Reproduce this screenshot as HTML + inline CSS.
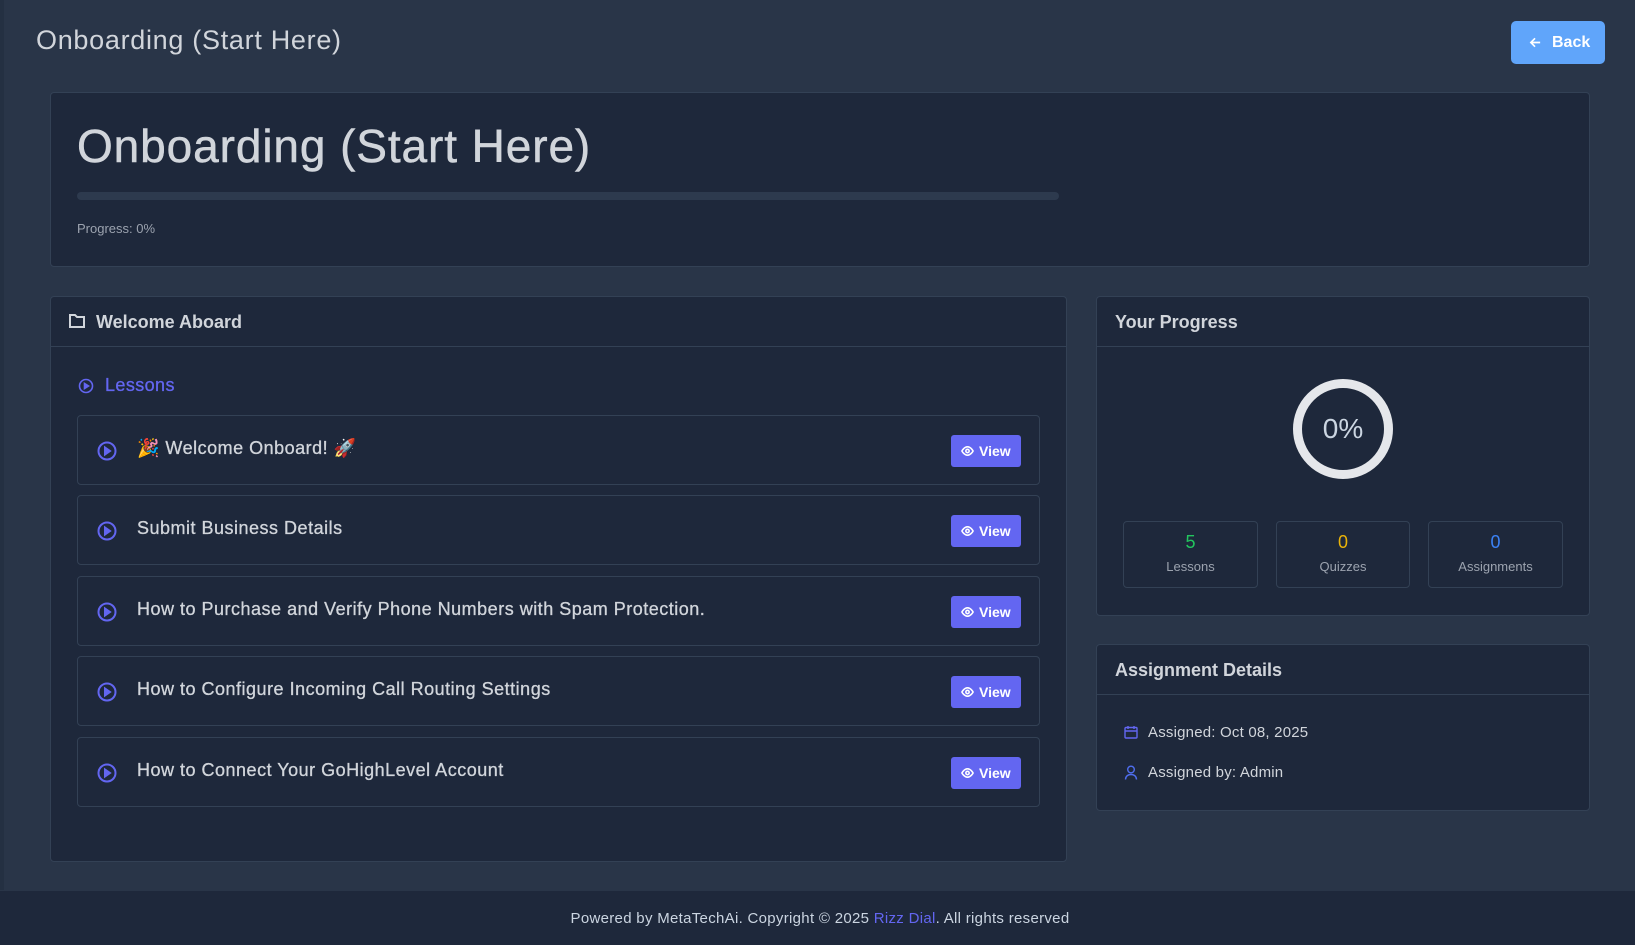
<!DOCTYPE html>
<html><head><meta charset="utf-8"><style>
*{box-sizing:border-box;margin:0;padding:0}
body{width:1635px;height:945px;background:#293548;font-family:"Liberation Sans",sans-serif;color:#d1d5db;position:relative;overflow:hidden}
.abs{position:absolute}
.card{position:absolute;background:#1e283b;border:1px solid #334155;border-radius:4px}
.hdr{position:absolute;left:0;right:0;top:0;height:50px;border-bottom:1px solid #334155}
.row{position:absolute;left:77px;width:963px;height:70px;border:1px solid #334155;border-radius:4px;background:#1e283b}
.row .t{position:absolute;left:59px;top:22px;font-size:18px;color:#d1d5db;letter-spacing:0.5px;-webkit-text-stroke:0.3px #d1d5db}
.row svg.p{position:absolute;left:19px;top:25px}
.btn{position:absolute;left:873px;top:19px;width:70px;height:32px;background:#6366f1;border-radius:3px;color:#fff;font-weight:bold;font-size:14px;line-height:32px;padding-left:28px}
.btn svg{position:absolute;left:10px;top:10px}
.stat{position:absolute;top:521px;height:67px;border:1px solid #334155;border-radius:4px;text-align:center}
.stat b{display:block;font-size:18px;font-weight:normal;margin-top:10px}
.stat span{display:block;font-size:13px;color:#9ca3af;margin-top:6px}
</style></head><body>
<div class="abs" style="left:0;top:0;width:4px;height:890px;background:#243042"></div>
<div class="abs" style="left:36px;top:25px;font-size:27px;color:#d1d5db;letter-spacing:0.7px">Onboarding (Start Here)</div>
<div class="abs" style="left:1511px;top:21px;width:94px;height:43px;background:#60a5fa;border-radius:5px;color:#fff;font-size:16px;font-weight:bold;line-height:43px;padding-left:41px">
<svg class="abs" style="left:18px;top:15px" width="13" height="13" viewBox="0 0 14 14" fill="none" stroke="#fff" stroke-width="1.8"><path d="M12 7H2M6.5 2.5L2 7l4.5 4.5"/></svg>Back</div>

<div class="card" style="left:50px;top:92px;width:1540px;height:175px">
<div class="abs" style="left:26px;top:26px;font-size:46px;color:#d1d5db;letter-spacing:0.9px;-webkit-text-stroke:0.5px #d1d5db">Onboarding (Start Here)</div>
<div class="abs" style="left:26px;top:99px;width:982px;height:8px;background:#2d3a4e;border-radius:4px"></div>
<div class="abs" style="left:26px;top:128px;font-size:13px;color:#9ca3af">Progress: 0%</div>
</div>

<div class="card" style="left:50px;top:296px;width:1017px;height:566px">
<div class="hdr"></div>
<svg class="abs" style="left:18px;top:17px" width="16" height="14" viewBox="0 0 16 14" fill="none" stroke="#d1d5db" stroke-width="2"><path d="M1 1h5l2 2h7v10H1z"/></svg>
<div class="abs" style="left:45px;top:15px;font-size:18px;font-weight:bold;color:#d1d5db">Welcome Aboard</div>
<svg class="abs" style="left:27px;top:81px" width="16" height="16" viewBox="0 0 16 16" fill="none" stroke="#6366f1" stroke-width="1.6"><circle cx="8" cy="8" r="6.5"/><path d="M6.5 5.5v5l4-2.5z" fill="#6366f1"/></svg>
<div class="abs" style="left:54px;top:78px;font-size:18px;color:#6366f1;letter-spacing:0.4px;-webkit-text-stroke:0.3px #6366f1">Lessons</div>
</div>

<div class="row" style="top:415px"><svg class="p" width="20" height="20" viewBox="0 0 20 20" fill="none" stroke="#6366f1" stroke-width="2"><circle cx="10" cy="10" r="8.5"/><path d="M8 6.5v7l5-3.5z" fill="#6366f1"/></svg><div class="t">🎉 Welcome Onboard! 🚀</div><div class="btn"><svg width="13" height="12" viewBox="0 0 14 12" fill="none" stroke="#fff" stroke-width="1.7"><path d="M1 6s2.3-4.5 6-4.5S13 6 13 6s-2.3 4.5-6 4.5S1 6 1 6z"/><circle cx="7" cy="6" r="1.8"/></svg>View</div></div>
<div class="row" style="top:495px"><svg class="p" width="20" height="20" viewBox="0 0 20 20" fill="none" stroke="#6366f1" stroke-width="2"><circle cx="10" cy="10" r="8.5"/><path d="M8 6.5v7l5-3.5z" fill="#6366f1"/></svg><div class="t">Submit Business Details</div><div class="btn"><svg width="13" height="12" viewBox="0 0 14 12" fill="none" stroke="#fff" stroke-width="1.7"><path d="M1 6s2.3-4.5 6-4.5S13 6 13 6s-2.3 4.5-6 4.5S1 6 1 6z"/><circle cx="7" cy="6" r="1.8"/></svg>View</div></div>
<div class="row" style="top:576px"><svg class="p" width="20" height="20" viewBox="0 0 20 20" fill="none" stroke="#6366f1" stroke-width="2"><circle cx="10" cy="10" r="8.5"/><path d="M8 6.5v7l5-3.5z" fill="#6366f1"/></svg><div class="t">How to Purchase and Verify Phone Numbers with Spam Protection.</div><div class="btn"><svg width="13" height="12" viewBox="0 0 14 12" fill="none" stroke="#fff" stroke-width="1.7"><path d="M1 6s2.3-4.5 6-4.5S13 6 13 6s-2.3 4.5-6 4.5S1 6 1 6z"/><circle cx="7" cy="6" r="1.8"/></svg>View</div></div>
<div class="row" style="top:656px"><svg class="p" width="20" height="20" viewBox="0 0 20 20" fill="none" stroke="#6366f1" stroke-width="2"><circle cx="10" cy="10" r="8.5"/><path d="M8 6.5v7l5-3.5z" fill="#6366f1"/></svg><div class="t">How to Configure Incoming Call Routing Settings</div><div class="btn"><svg width="13" height="12" viewBox="0 0 14 12" fill="none" stroke="#fff" stroke-width="1.7"><path d="M1 6s2.3-4.5 6-4.5S13 6 13 6s-2.3 4.5-6 4.5S1 6 1 6z"/><circle cx="7" cy="6" r="1.8"/></svg>View</div></div>
<div class="row" style="top:737px"><svg class="p" width="20" height="20" viewBox="0 0 20 20" fill="none" stroke="#6366f1" stroke-width="2"><circle cx="10" cy="10" r="8.5"/><path d="M8 6.5v7l5-3.5z" fill="#6366f1"/></svg><div class="t">How to Connect Your GoHighLevel Account</div><div class="btn"><svg width="13" height="12" viewBox="0 0 14 12" fill="none" stroke="#fff" stroke-width="1.7"><path d="M1 6s2.3-4.5 6-4.5S13 6 13 6s-2.3 4.5-6 4.5S1 6 1 6z"/><circle cx="7" cy="6" r="1.8"/></svg>View</div></div>

<div class="card" style="left:1096px;top:296px;width:494px;height:320px">
<div class="hdr"></div>
<div class="abs" style="left:18px;top:15px;font-size:18px;font-weight:bold;color:#d1d5db">Your Progress</div>
</div>
<svg class="abs" style="left:1293px;top:379px" width="100" height="100"><circle cx="50" cy="50" r="45.5" fill="none" stroke="#e5e7eb" stroke-width="9"/><text x="50" y="59" text-anchor="middle" font-family="Liberation Sans,sans-serif" font-size="28" fill="#cbd5e1">0%</text></svg>
<div class="stat" style="left:1123px;width:135px"><b style="color:#22c55e">5</b><span>Lessons</span></div>
<div class="stat" style="left:1276px;width:134px"><b style="color:#eab308">0</b><span>Quizzes</span></div>
<div class="stat" style="left:1428px;width:135px"><b style="color:#3b82f6">0</b><span>Assignments</span></div>

<div class="card" style="left:1096px;top:644px;width:494px;height:167px">
<div class="hdr"></div>
<div class="abs" style="left:18px;top:15px;font-size:18px;font-weight:bold;color:#d1d5db">Assignment Details</div>
<svg class="abs" style="left:27px;top:80px" width="14" height="14" viewBox="0 0 14 14" fill="none" stroke="#6366f1" stroke-width="1.4"><rect x="1" y="2.5" width="12" height="10.5" rx="1"/><path d="M1 6h12M4 1v3M10 1v3"/></svg>
<div class="abs" style="left:51px;top:79px;font-size:15px;color:#d1d5db;letter-spacing:0.2px">Assigned: Oct 08, 2025</div>
<svg class="abs" style="left:27px;top:120px" width="14" height="15" viewBox="0 0 14 15" fill="none" stroke="#4f6ef0" stroke-width="1.4"><circle cx="7" cy="4.5" r="3.3"/><path d="M1.5 14.5c0-3.2 2.4-5 5.5-5s5.5 1.8 5.5 5"/></svg>
<div class="abs" style="left:51px;top:119px;font-size:15px;color:#d1d5db;letter-spacing:0.2px">Assigned by: Admin</div>
</div>

<div class="abs" style="left:0;top:891px;width:1635px;height:54px;background:#1e283b"></div>
<div class="abs" style="left:0;top:910px;width:1635px;text-align:center;font-size:15px;color:#cbd5e1;padding-left:5px;letter-spacing:0.3px">Powered by MetaTechAi. Copyright © 2025 <span style="color:#6366f1">Rizz Dial</span>. All rights reserved</div>
</body></html>
